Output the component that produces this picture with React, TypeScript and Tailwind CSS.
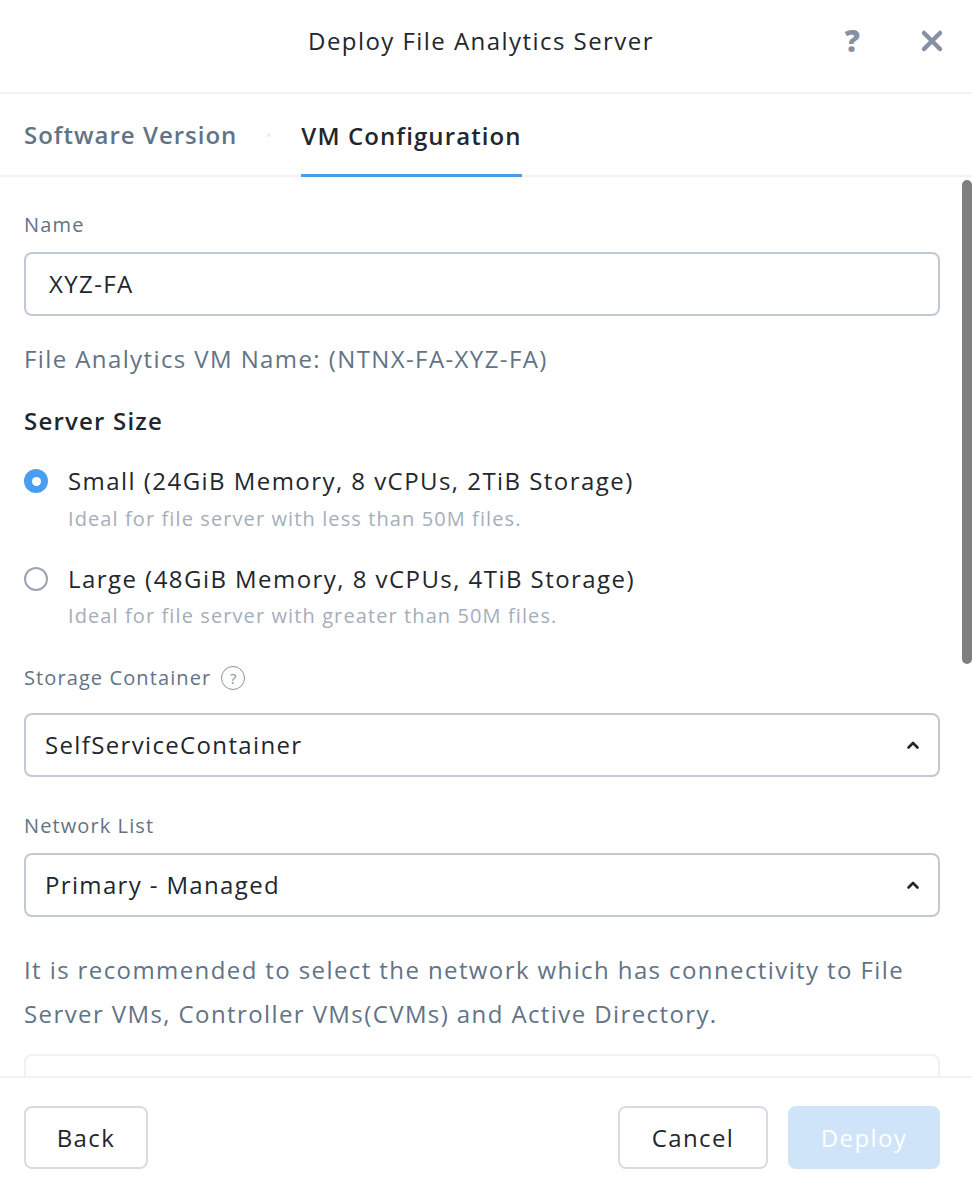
import React from "react";

const F = { fontFamily: "'Open Sans', 'Noto Sans', sans-serif" };

function Chevron() {
  return (
    <svg width="14" height="10" viewBox="0 0 14 10" className="shrink-0">
      <path d="M2.5 7.5 L7 3 L11.5 7.5" fill="none" stroke="#22272e" strokeWidth="2.6" strokeLinecap="round" strokeLinejoin="round" />
    </svg>
  );
}

function Select({ value }: { value: string }) {
  return (
    <div className="h-[64px] border-2 border-[#c3c9d3] rounded-[8px] flex items-center justify-between pl-[19px] pr-[18px]">
      <span className="text-[24px] tracking-[1.35px] text-[#22272e]">{value}</span>
      <Chevron />
    </div>
  );
}

export default function App() {
  return (
    <div className="w-[972px] h-[1180px] bg-white flex flex-col overflow-hidden" style={F}>
      {/* Header */}
      <div className="h-[94px] shrink-0 border-b-2 border-[#f2f2f2] relative flex items-center justify-center pb-[10px] pr-[10px]">
        <span className="text-[24px] tracking-[1.45px] text-[#22272e]">Deploy File Analytics Server</span>
        <div className="absolute right-[28px] top-0 h-full flex items-center gap-[60px] pb-[10px]">
          <span className="text-[30px] font-extrabold text-[#8591a2] leading-none">?</span>
          <svg width="24" height="24" viewBox="0 0 24 24">
            <path d="M4 4 L20 20 M20 4 L4 20" stroke="#8591a2" strokeWidth="4.5" strokeLinecap="round" />
          </svg>
        </div>
      </div>

      {/* Tabs */}
      <div className="h-[83px] shrink-0 border-b-2 border-[#f2f2f2] flex items-stretch pl-[24px]">
        <div className="flex items-center text-[24px] tracking-[1px] font-semibold text-[#627386]">Software Version</div>
        <div className="flex items-center px-[30px]">
          <span className="w-[4px] h-[4px] rounded-full bg-[#eceef0]" />
        </div>
        <div className="flex items-center text-[24px] tracking-[1.1px] font-semibold text-[#22272e] border-b-[3px] border-[#4b9deb] pt-[3px] mb-[-2px]">
          VM Configuration
        </div>
      </div>

      {/* Content */}
      <div className="flex-1 relative overflow-hidden">
        <div className="px-[24px] pr-[32px] pt-[35px] flex flex-col">
          <div className="text-[20px] tracking-[1.2px] text-[#627386] leading-[26px]">Name</div>
          <div className="mt-[14px] h-[64px] border-2 border-[#c3c9d3] rounded-[8px] flex items-center pl-[23px]">
            <span className="text-[24px] tracking-[1.4px] text-[#22272e]">XYZ-FA</span>
          </div>
          <div className="mt-[28px] text-[24px] tracking-[1.4px] text-[#627386] leading-[30px]">File Analytics VM Name: (NTNX-FA-XYZ-FA)</div>
          <div className="mt-[32px] text-[24px] tracking-[1.2px] font-semibold text-[#22272e] leading-[30px]">Server Size</div>

          <div className="mt-[26px] flex items-start gap-[20px]">
            <div className="mt-[7px] w-[24px] h-[24px] rounded-full bg-[#4a9ef0] flex items-center justify-center shrink-0">
              <div className="w-[9px] h-[9px] rounded-full bg-white" />
            </div>
            <div className="flex flex-col">
              <span className="text-[24px] tracking-[1.45px] text-[#22272e] leading-[38px]">Small (24GiB Memory, 8 vCPUs, 2TiB Storage)</span>
              <span className="text-[20px] tracking-[1.1px] text-[#a4aebb] leading-[38px]">Ideal for file server with less than 50M files.</span>
            </div>
          </div>
          <div className="mt-[22px] flex items-start gap-[20px]">
            <div className="mt-[7px] w-[24px] h-[24px] rounded-full border-2 border-[#9aa5b3] shrink-0" />
            <div className="flex flex-col">
              <span className="text-[24px] tracking-[1.45px] text-[#22272e] leading-[38px]">Large (48GiB Memory, 8 vCPUs, 4TiB Storage)</span>
              <span className="text-[20px] tracking-[1.1px] text-[#a4aebb] leading-[36px]">Ideal for file server with greater than 50M files.</span>
            </div>
          </div>

          <div className="mt-[31px] flex items-center gap-[10px] text-[20px] tracking-[1.1px] text-[#627386] leading-[26px]">
            <span>Storage Container</span>
            <span className="w-[24px] h-[24px] rounded-full border-[1.5px] border-[#8591a2] text-[#8591a2] text-[15px] tracking-normal flex items-center justify-center leading-none">?</span>
          </div>
          <div className="mt-[22px]">
            <Select value="SelfServiceContainer" />
          </div>

          <div className="mt-[36px] text-[20px] tracking-[1.1px] text-[#627386] leading-[26px]">Network List</div>
          <div className="mt-[14px]">
            <Select value="Primary - Managed" />
          </div>

          <div className="mt-[31px] text-[24px] tracking-[1.4px] text-[#627386] leading-[44px]">
            It is recommended to select the network which has connectivity to File Server VMs, Controller VMs(CVMs) and Active Directory.
          </div>
          <div className="mt-[18px] h-[80px] border-2 border-[#f0f1f3] rounded-[8px]" />
        </div>
        <div className="absolute right-0 top-[3px] w-[10px] h-[484px] rounded-[5px] bg-[#7f7f7f]" />
      </div>

      {/* Footer */}
      <div className="h-[104px] shrink-0 border-t-2 border-[#f2f2f2] flex items-start justify-between px-[32px] pl-[24px] pt-[28px]">
        <button className="w-[124px] h-[63px] border-2 border-[#d8dce2] rounded-[8px] text-[24px] tracking-[1.4px] text-[#22272e] bg-white">Back</button>
        <div className="flex gap-[20px]">
          <button className="w-[150px] h-[63px] border-2 border-[#d8dce2] rounded-[8px] text-[24px] tracking-[1.4px] text-[#22272e] bg-white">Cancel</button>
          <button className="w-[152px] h-[63px] rounded-[8px] text-[24px] tracking-[1.4px] text-white bg-[#cfe3f9]">Deploy</button>
        </div>
      </div>
    </div>
  );
}
